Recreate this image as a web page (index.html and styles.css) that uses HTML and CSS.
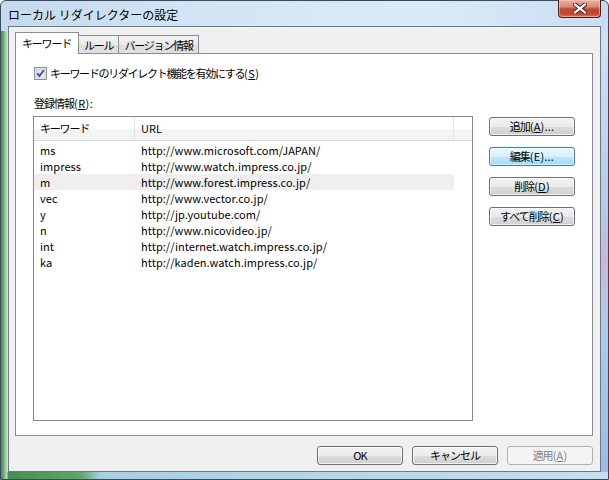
FILE: index.html
```html
<!DOCTYPE html>
<html lang="ja">
<head>
<meta charset="utf-8">
<link rel="stylesheet" href="styles.css">
</head>
<body>
<div class="window">
  <div class="titlebar">
    <span class="title">ローカル リダイレクターの設定</span>
    <div class="close">
      <svg width="14" height="11" viewBox="0 0 14 11">
        <path d="M2 1.5 L12 9.5 M12 1.5 L2 9.5" stroke="#3a2a28" stroke-width="4.2" stroke-linecap="square" fill="none"/>
        <path d="M2 1.5 L12 9.5 M12 1.5 L2 9.5" stroke="#ffffff" stroke-width="2.2" stroke-linecap="square" fill="none"/>
      </svg>
    </div>
  </div>
  <div class="client">
    <div class="tabs">
      <div class="tab active">キーワード</div>
      <div class="tab">ルール</div>
      <div class="tab">バージョン情報</div>
    </div>
    <div class="panel">
      <div class="check">
        <span class="box">
          <svg width="13" height="13" viewBox="0 0 13 13">
            <defs>
              <linearGradient id="cb" x1="0" y1="0" x2="1" y2="1">
                <stop offset="0" stop-color="#d9d9d9"/>
                <stop offset="1" stop-color="#f7f7f7"/>
              </linearGradient>
            </defs>
            <rect x="0.5" y="0.5" width="12" height="12" fill="#f4f4f4" stroke="#8f8f8f"/>
            <rect x="2" y="2" width="9" height="9" fill="url(#cb)" stroke="#b5b9c2" stroke-width="0.6"/>
            <path d="M3.3 6.4 L5.4 9 L9.8 3.2" stroke="#2d4f9e" stroke-width="1.8" fill="none"/>
          </svg>
        </span>
        <span class="label">キーワードのリダイレクト機能を有効にする<span class="mn">(<u>S</u>)</span></span>
      </div>
      <div class="reglabel">登録情報<span class="mn">(<u>R</u>):</span></div>
      <div class="listarea">
        <div class="list">
          <div class="header">
            <div class="hcol c1">キーワード</div>
            <div class="hcol c2">URL</div>
            <div class="hcol c3"></div>
          </div>
          <div class="rows">
            <div class="row"><span class="c1">ms</span><span class="c2">http://www.microsoft.com/JAPAN/</span></div>
            <div class="row"><span class="c1">impress</span><span class="c2">http://www.watch.impress.co.jp/</span></div>
            <div class="row sel"><span class="c1">m</span><span class="c2">http://www.forest.impress.co.jp/</span></div>
            <div class="row"><span class="c1">vec</span><span class="c2">http://www.vector.co.jp/</span></div>
            <div class="row"><span class="c1">y</span><span class="c2">http://jp.youtube.com/</span></div>
            <div class="row"><span class="c1">n</span><span class="c2">http://www.nicovideo.jp/</span></div>
            <div class="row"><span class="c1">int</span><span class="c2">http://internet.watch.impress.co.jp/</span></div>
            <div class="row"><span class="c1">ka</span><span class="c2">http://kaden.watch.impress.co.jp/</span></div>
          </div>
        </div>
        <div class="sidebtns">
          <div class="btn">追加<span class="mn">(<u>A</u>)...</span></div>
          <div class="btn focus">編集<span class="mn">(E)...</span></div>
          <div class="btn">削除<span class="mn">(<u>D</u>)</span></div>
          <div class="btn">すべて削除<span class="mn">(<u>C</u>)</span></div>
        </div>
      </div>
    </div>
    <div class="footer">
      <div class="btn">OK</div>
      <div class="btn">キャンセル</div>
      <div class="btn disabled">適用<span class="mn">(<u>A</u>)</span></div>
    </div>
  </div>
</div>
</body>
</html>
```
FILE: styles.css
```css
* { box-sizing: border-box; }
html, body { margin: 0; padding: 0; }
body {
  width: 609px;
  height: 480px;
  overflow: hidden;
  font-family: "Noto Sans CJK JP", "Liberation Sans", sans-serif;
  font-size: 11px;
  color: #000;
}
.window {
  width: 609px;
  height: 480px;
  display: flex;
  flex-direction: column;
  border: 1px solid #3b4a5a;
  border-radius: 6px 6px 0 0;
  background:
    linear-gradient(to right, #3f8f4c 0, #74b07c 3px, #c9dfd0 6px, rgba(210,228,240,0) 7px) 0 30px / 8px 100% no-repeat,
    linear-gradient(to right, #3e9147 0, #5fa866 80px, #a7cfe2 100px, #c7def0 100%) 0 471px / 100% 9px no-repeat,
    linear-gradient(to bottom, #c2d9ef 0, #cde1f3 40px, #b3cdea 200px, #c8b9d4 260px, #aecbea 320px, #98bde3 100%) 600px 0 / 9px 100% no-repeat,
    linear-gradient(to right, #c5daee 0, #d3e5f5 35%, #dbeaf7 70%, #c9def2 100%);
}
.titlebar {
  height: 28px;
  display: flex;
  align-items: flex-start;
  justify-content: space-between;
  padding-left: 7px;
  padding-right: 7px;
}
.title {
  font-size: 12px;
  margin-top: 5px;
  color: #000;
}
.close {
  width: 43px;
  height: 18px;
  margin-top: -1px;
  border: 1px solid #47201a;
  border-top: none;
  border-radius: 0 0 4px 4px;
  background: linear-gradient(to bottom, #e8b0a4 0, #d88a78 40%, #c24a32 52%, #c1452d 80%, #d9745c 100%);
  display: flex;
  align-items: center;
  justify-content: center;
  box-shadow: inset 0 0 0 1px rgba(255,210,200,0.5);
}
.client {
  flex: 1;
  margin: 0 7px 7px 7px;
  background: #f0f0f0;
  border: 1px solid #6d7a88;
  padding: 5px 7px 6px 6px;
  display: flex;
  flex-direction: column;
}
.tabs {
  display: flex;
  align-items: flex-end;
  height: 21px;
}
.tab {
  height: 18px;
  border: 1px solid #898c95;
  border-bottom: none;
  margin-left: -1px;
  padding: 1px 5px 0 5px;
  background: linear-gradient(to bottom, #f3f3f3 0, #ebebeb 50%, #dedede 51%, #e0e0e0 100%);
  line-height: 16px;
  font-size: 11px;
  letter-spacing: -1.2px;
}
.tab:first-child { margin-left: 0; }
.tab.active {
  width: 64px;
  height: 22px;
  margin-bottom: -1px;
  background: #fff;
  padding: 2px 0 0 6px;
  position: relative;
  z-index: 1;
}
.panel {
  flex: 1;
  background: #fff;
  border: 1px solid #898c95;
  padding: 13px 17px 14px 17px;
  display: flex;
  flex-direction: column;
}
.check {
  display: flex;
  align-items: center;
  height: 13px;
  margin-left: 1px;
}
.box { width: 13px; height: 13px; display: block; margin-right: 3px; }
.box svg { display: block; }
.label { letter-spacing: -1.3px; line-height: 13px; }
.mn { letter-spacing: 0.4px; }
.reglabel {
  margin-top: 16px;
  height: 15px;
  line-height: 15px;
  margin-left: 1px;
  letter-spacing: -1px;
}
.listarea {
  margin-top: 5px;
  flex: 1;
  display: flex;
  align-items: flex-start;
}
.list {
  width: 440px;
  height: 305px;
  border: 1px solid #828790;
  background: #fff;
}
.header {
  height: 24px;
  display: flex;
  background: linear-gradient(to bottom, #ffffff 0, #ffffff 50%, #f4f5f7 51%, #f1f2f4 100%);
  border-bottom: 1px solid #d5d5d5;
}
.hcol {
  height: 23px;
  line-height: 22px;
  padding-left: 6px;
  border-right: 1px solid #e3e5e8;
  letter-spacing: -1.2px;
}
.hcol.c1 { width: 101px; }
.hcol.c2 { width: 319px; letter-spacing: 0; }
.hcol.c3 { flex: 1; border-right: none; }
.rows { padding-top: 1px; letter-spacing: 0.05px; }
.row {
  height: 16px;
  line-height: 16px;
  display: flex;
  width: 420px;
}
.row.sel { background: #efefef; }
.row .c1 { width: 101px; padding-left: 6px; }
.row .c2 { width: 319px; padding-left: 6px; }
.sidebtns {
  margin-left: 16px;
  margin-top: 1px;
  display: flex;
  flex-direction: column;
  gap: 11px;
}
.btn {
  width: 86px;
  height: 19px;
  border: 1px solid #707070;
  border-radius: 3px;
  background: linear-gradient(to bottom, #f2f2f2 0, #ebebeb 50%, #dddddd 51%, #cfcfcf 100%);
  box-shadow: inset 0 0 0 1px rgba(255,255,255,0.7);
  text-align: center;
  line-height: 17px;
  letter-spacing: -1px;
}
.btn .mn { letter-spacing: 0.2px; }
.btn.focus {
  border-color: #3c7fb1;
  background: linear-gradient(to bottom, #eaf6fd 0, #d9f0fc 50%, #bee6fd 51%, #a7d9f5 100%);
  box-shadow: inset 0 0 0 1px rgba(255,255,255,0.6);
}
.btn.disabled {
  border-color: #adb2b5;
  background: #f4f4f4;
  color: #838383;
  box-shadow: none;
}
.footer {
  margin-top: 10px;
  display: flex;
  justify-content: flex-end;
  gap: 9px;
}
u { text-decoration: underline; text-underline-offset: 1px; }
```
